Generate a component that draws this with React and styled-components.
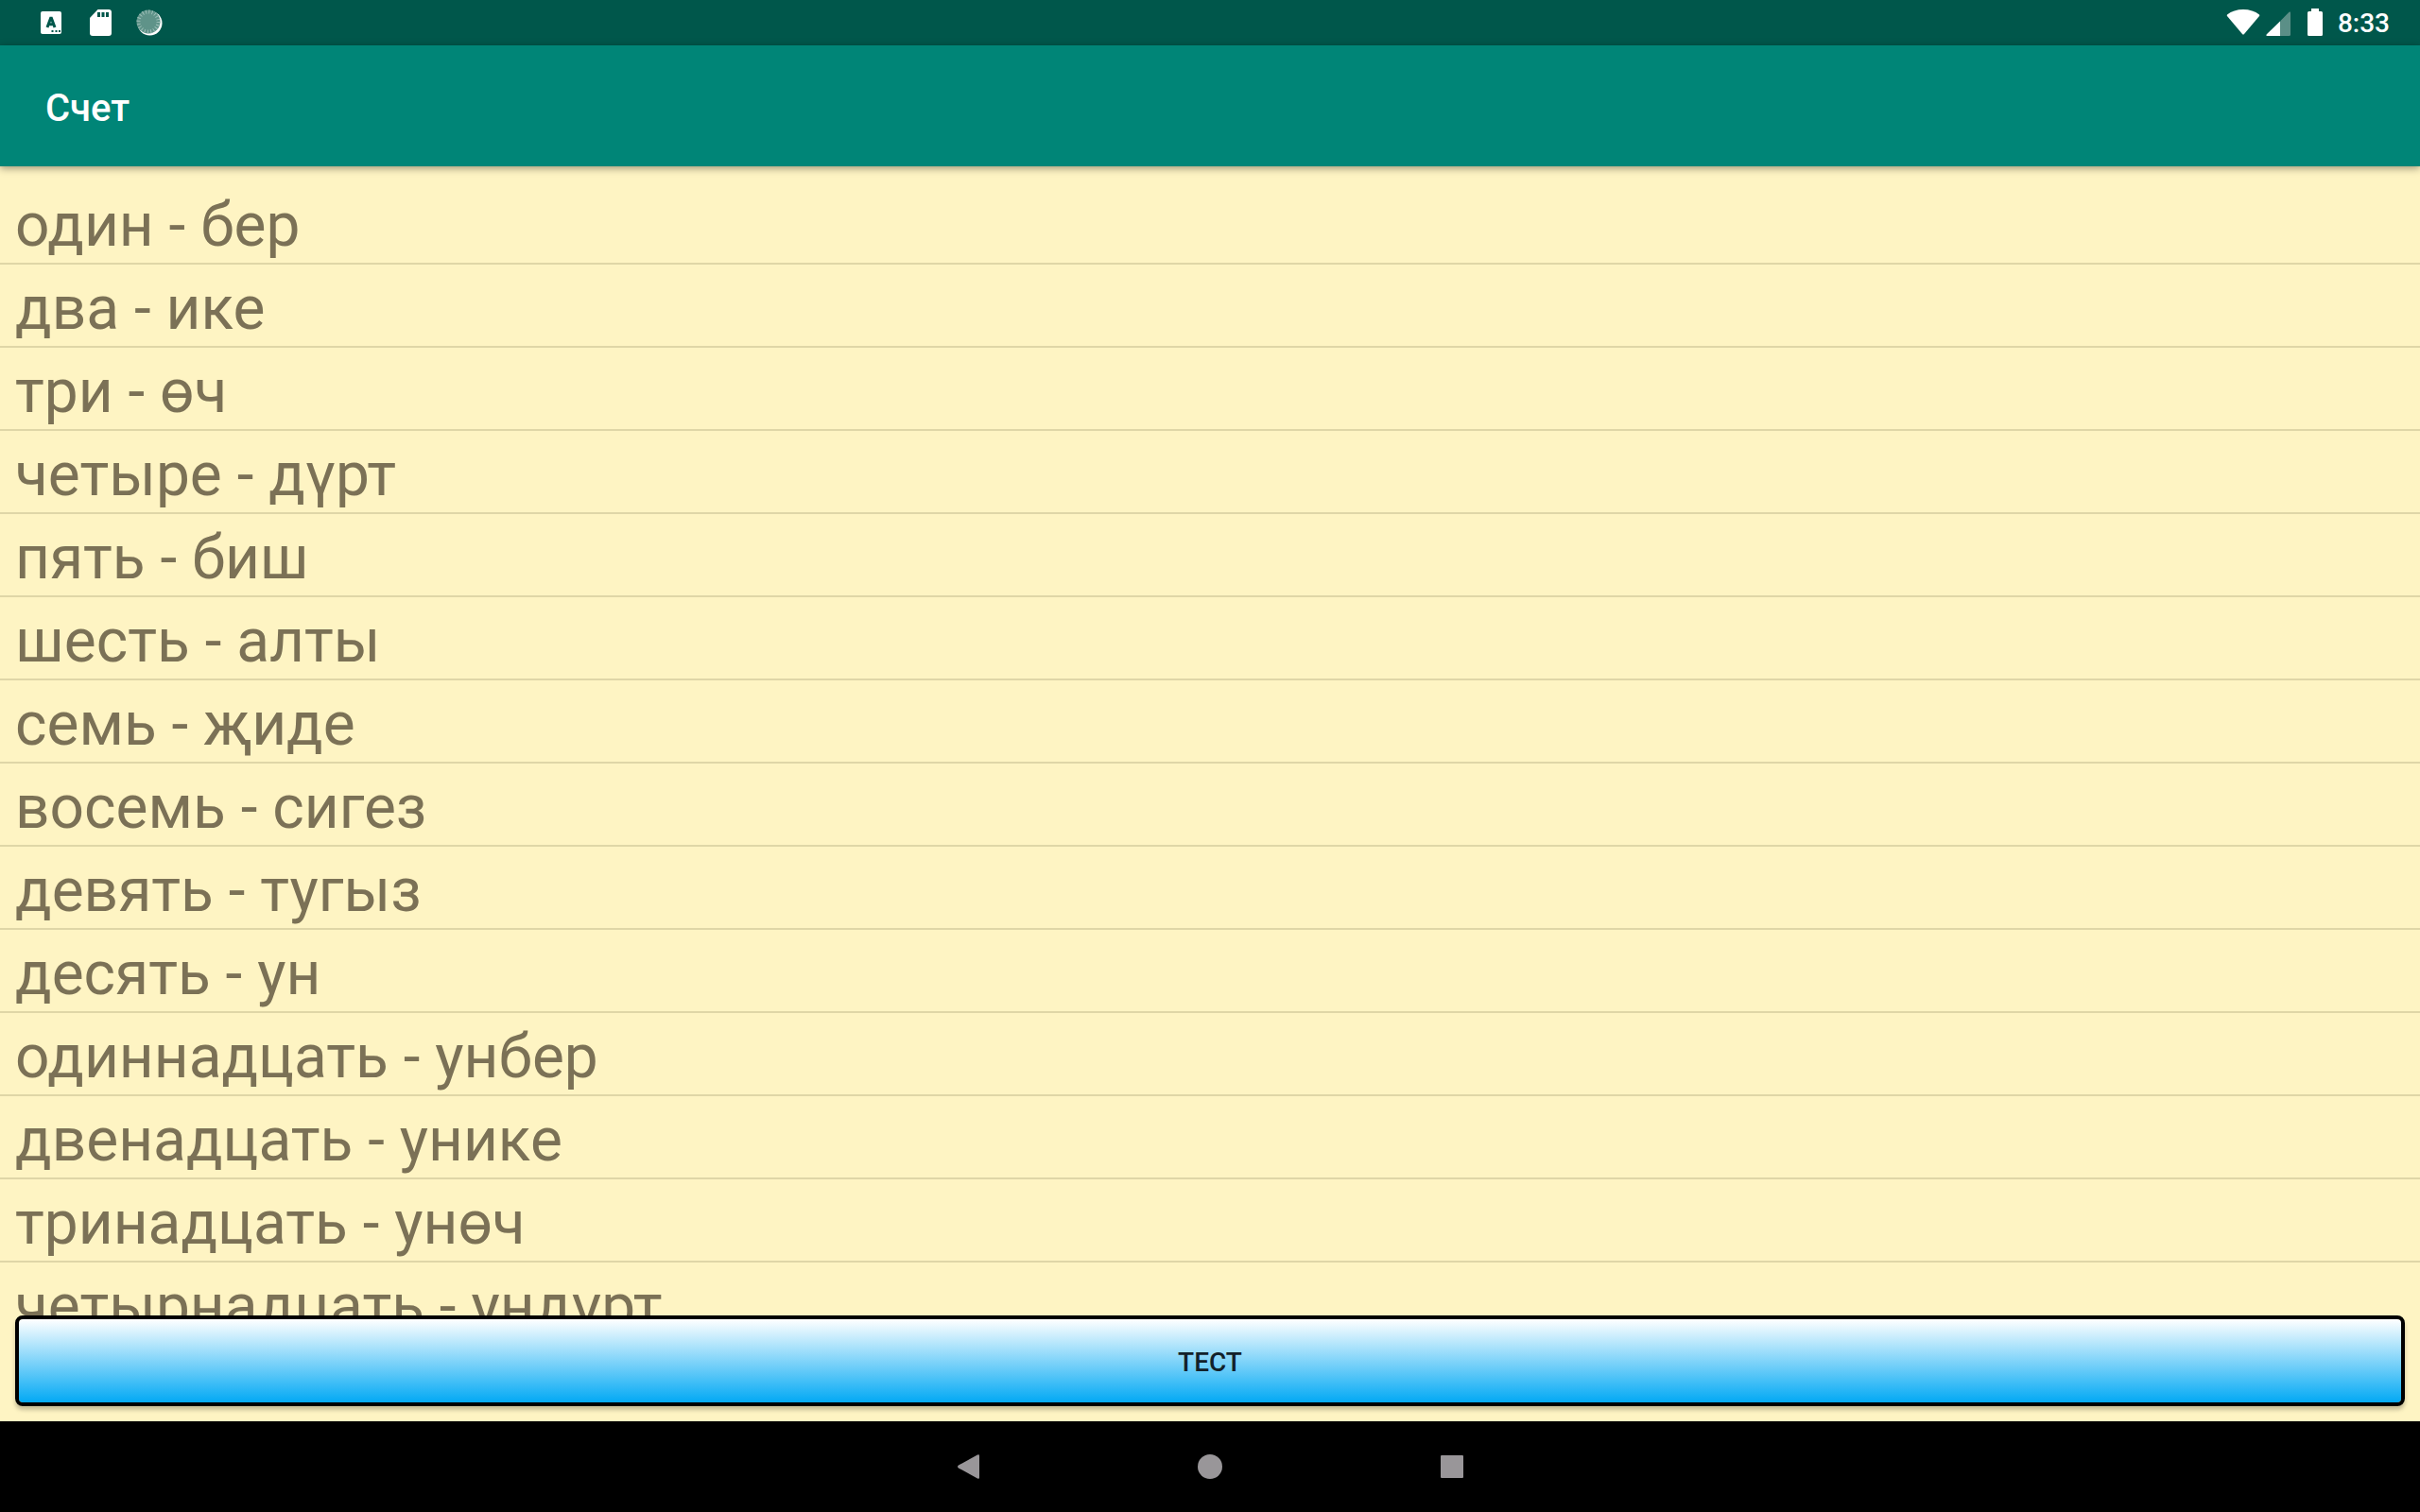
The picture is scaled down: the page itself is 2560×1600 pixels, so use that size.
import React from 'react';
import styled, { createGlobalStyle } from 'styled-components';

const words = [
  ['один', 'бер'],
  ['два', 'ике'],
  ['три', 'өч'],
  ['четыре', 'дүрт'],
  ['пять', 'биш'],
  ['шесть', 'алты'],
  ['семь', 'җиде'],
  ['восемь', 'сигез'],
  ['девять', 'тугыз'],
  ['десять', 'ун'],
  ['одиннадцать', 'унбер'],
  ['двенадцать', 'унике'],
  ['тринадцать', 'унөч'],
  ['четырнадцать', 'ундүрт'],
];

const GlobalStyle = createGlobalStyle`
* {
  box-sizing: border-box;
}
body {
  margin: 0;
  font-family: Roboto, 'Noto Sans', sans-serif;
  background: #fef4c3;
}`;

const Screen = styled.div`
display: flex;
flex-direction: column;
height: 100vh;
overflow: hidden;
`;

const StatusBar = styled.div`
display: flex;
justify-content: space-between;
align-items: center;
flex: none;
height: 48px;
padding: 0 32px 0 40px;
background: #00574b;
color: #fff;
`;

const StatusGroup = styled.div`
display: flex;
align-items: center;
gap: ${(props) => props.$gap};
  svg {
    display: block;
  }`;

const Clock = styled.time`
padding-top: 2px;
font-size: 28px;
font-weight: 500;
line-height: 48px;
`;

const AppBar = styled.header`
display: flex;
align-items: center;
flex: none;
height: 128px;
padding: 4px 48px 0;
background: #008577;
box-shadow: 0 2px 8px rgba(0, 0, 0, 0.4);
z-index: 1;
`;

const Title = styled.h1`
margin: 0;
color: #fff;
font-size: 40px;
font-weight: 500;
`;

const Content = styled.main`
display: flex;
flex-direction: column;
flex: 1;
min-height: 0;
padding-top: 16px;
`;

const WordList = styled.ul`
flex: 1;
min-height: 0;
margin: 0;
padding: 0;
overflow: hidden;
list-style: none;
`;

const Word = styled.li`
padding: 8px 16px 0;
border-bottom: 2px solid #dfd6a7;
color: #7b7156;
font-size: 64px;
line-height: 78px;
`;

const TestButton = styled.button`
flex: none;
height: 96px;
margin: 0 16px 16px;
padding: 2px 0 0;
border: 4px solid #000;
border-radius: 8px;
background: linear-gradient(#fff, #03a9f4) padding-box;
box-shadow: 0 4px 4px rgba(0, 0, 0, 0.22);
color: #12212a;
font-family: inherit;
font-size: 28px;
font-weight: 500;
text-transform: uppercase;
`;

const NavBar = styled.nav`
display: flex;
justify-content: center;
align-items: center;
flex: none;
gap: 160px;
height: 96px;
background: #000;
`;

const NavButton = styled.button`
display: flex;
justify-content: center;
align-items: center;
width: 96px;
height: 96px;
padding: 0;
border: 0;
background: none;
color: #999699;
`;

const KeyboardIcon = () => (
  <svg width="28" height="28" viewBox="0 0 28 28" aria-hidden="true">
    <rect x="3" y="2" width="22" height="24" rx="2" fill="#fff" />
    <path d="M10 19 13.600 9.200h.8L18 19M11 15.800h6" fill="none" stroke="#00574b" strokeWidth="3" />
    <path d="M14.500 22h2v2h-2zM18.500 22h2v2h-2zM22 22h2v2h-2z" fill="#00574b" />
  </svg>
);

const SdCardIcon = () => (
  <svg width="28" height="32" viewBox="0 0 28 32" aria-hidden="true">
    <path d="M11.500 2H23a3 3 0 0 1 3 3v22a3 3 0 0 1-3 3H6a3 3 0 0 1-3-3V11z" fill="#fff" />
    <path d="M11 5h3v5h-3zM15.500 5h3v5h-3zM20 5h3v5h-3z" fill="#00574b" />
  </svg>
);

const SyncIcon = () => (
  <svg width="28" height="28" viewBox="0 0 28 28" aria-hidden="true">
    <circle cx="14.500" cy="14.500" r="13" fill="#fff" />
    <circle cx="13" cy="13" r="12.500" fill="#5f9389" />
    <circle cx="13" cy="13" r="10.500" fill="none" stroke="#9dbfb8" strokeWidth="4" strokeDasharray="1 2.300" />
  </svg>
);

const WifiIcon = () => (
  <svg width="36" height="28" viewBox="0 0 36 28" aria-hidden="true">
    <path d="M1 5.500Q8 0 18 0t17 5.500q.6.600 0 1.400L19 26q-1 1-2 0L1 6.900q-.6-.8 0-1.400z" fill="#fff" />
  </svg>
);

const SignalIcon = () => (
  <svg width="26" height="28" viewBox="0 0 26 28" aria-hidden="true">
    <path d="M15 12.500V28H1.500Q-.5 28 .8 26.200z" fill="#fff" />
    <path d="M15 12.500 24.500 2.800Q26 1.700 26 3.500v23q0 1.500-1.500 1.500H15z" fill="#5b8f87" />
  </svg>
);

const BatteryIcon = () => (
  <svg width="16" height="30" viewBox="0 0 16 30" aria-hidden="true">
    <path d="M4 0h8v3h2.500Q16 3 16 4.500v23q0 1.500-1.500 1.500h-13Q0 29 0 27.500v-23Q0 3 1.500 3H4z" fill="#fff" />
  </svg>
);

const App = () => (
  <>
    <GlobalStyle />
    <Screen>
      <StatusBar>
        <StatusGroup $gap="24px">
          <KeyboardIcon />
          <SdCardIcon />
          <SyncIcon />
        </StatusGroup>
        <StatusGroup $gap="18px">
          <StatusGroup $gap="6px">
            <WifiIcon />
            <SignalIcon />
          </StatusGroup>
          <StatusGroup $gap="16px">
            <BatteryIcon />
            <Clock>8:33</Clock>
          </StatusGroup>
        </StatusGroup>
      </StatusBar>
      <AppBar>
        <Title>Счет</Title>
      </AppBar>
      <Content>
        <WordList>
          {words.map(([russian, tatar]) => (
            <Word key={russian}>
              {`${russian} - ${tatar}`}
            </Word>
          ))}
        </WordList>
        <TestButton type="button">Тест</TestButton>
      </Content>
      <NavBar>
        <NavButton type="button" aria-label="Назад">
          <svg width="28" height="28" viewBox="0 0 28 28" aria-hidden="true">
            <path d="M26 2.500v23q0 2-2 1L4 15.500q-2-1.500 0-3L24 1.500q2-1 2 1z" fill="currentColor" />
          </svg>
        </NavButton>
        <NavButton type="button" aria-label="Домой">
          <svg width="28" height="28" viewBox="0 0 28 28" aria-hidden="true">
            <circle cx="14" cy="14" r="13" fill="currentColor" />
          </svg>
        </NavButton>
        <NavButton type="button" aria-label="Недавние">
          <svg width="28" height="28" viewBox="0 0 28 28" aria-hidden="true">
            <rect x="2" y="2" width="24" height="24" rx="1" fill="currentColor" />
          </svg>
        </NavButton>
      </NavBar>
    </Screen>
  </>
);

export default App;
